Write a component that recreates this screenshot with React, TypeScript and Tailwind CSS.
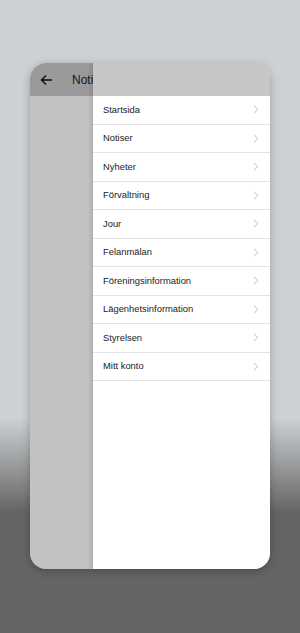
const items = [
  "Startsida",
  "Notiser",
  "Nyheter",
  "Förvaltning",
  "Jour",
  "Felanmälan",
  "Föreningsinformation",
  "Lägenhetsinformation",
  "Styrelsen",
  "Mitt konto",
];

const Chevron = () => (
  <svg width="6" height="9" viewBox="0 0 6 9" fill="none">
    <path d="M1 0.8 L4.8 4.5 L1 8.2" stroke="#bdbdbd" strokeWidth="1" />
  </svg>
);

const App = () => {
  return (
    <div
      className="w-[300px] h-[633px] pt-[63px] px-[30px] bg-[linear-gradient(to_bottom,#cdd1d4_0%,#cdd1d4_66%,#646464_81%,#646464_100%)]"
      style={{ fontFamily: '"Liberation Sans", Arial, sans-serif' }}
    >
      <div className="relative h-[506px] rounded-[16px] overflow-hidden bg-white shadow-[0_2px_8px_rgba(0,0,0,0.25)]">
        {/* underlying page */}
        <div className="flex items-center h-[33px] bg-[#cbcbcb] pl-[10px]">
          <svg width="13" height="12" viewBox="0 0 13 12" fill="none">
            <path d="M12 6 H1.5 M6 1.5 L1.5 6 L6 10.5" stroke="#111" strokeWidth="1.4" />
          </svg>
          <span className="ml-[19px] text-[12px] text-[#222]">Notiser</span>
        </div>
        {/* overlay */}
        <div className="absolute inset-0 bg-black/[0.24]" />
        {/* drawer */}
        <div className="absolute top-0 right-0 bottom-0 w-[177px] bg-white flex flex-col shadow-[-2px_0_4px_rgba(0,0,0,0.12)]">
          <div className="h-[33px] bg-[#c6c6c6]" />
          {items.map((item) => (
            <div
              key={item}
              className="flex items-center justify-between h-[28.5px] border-b border-[#e2e2e2] pl-[10px] pr-[11px]"
            >
              <span className="text-[9.4px] text-[#1a1a1a]">{item}</span>
              <Chevron />
            </div>
          ))}
        </div>
      </div>
    </div>
  );
};

export default App;
